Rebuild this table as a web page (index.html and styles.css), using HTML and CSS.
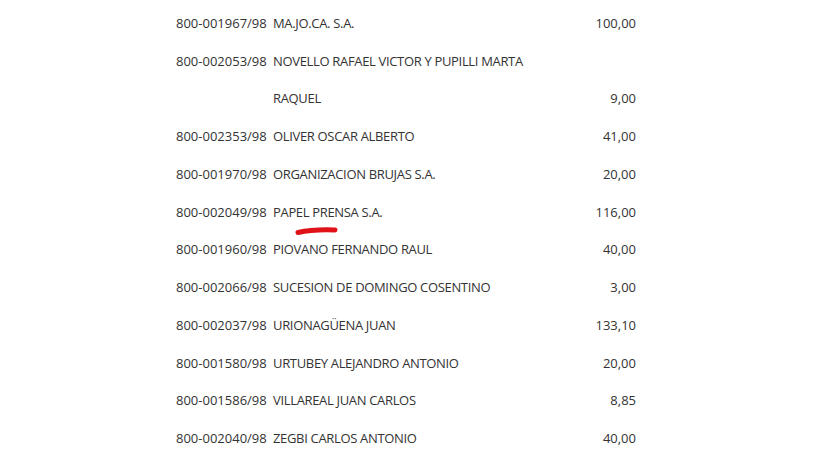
FILE: index.html
```html
<!DOCTYPE html>
<html lang="es">
<head>
<meta charset="utf-8">
<link rel="stylesheet" href="styles.css">
</head>
<body>
<div class="list">
  <div class="row"><span class="code">800-001967/98</span><span class="name">MA.JO.CA. S.A.</span><span class="amt">100,00</span></div>
  <div class="row"><span class="code">800-002053/98</span><span class="name">NOVELLO RAFAEL VICTOR Y PUPILLI MARTA RAQUEL</span><span class="amt amt-bottom">9,00</span></div>
  <div class="row"><span class="code">800-002353/98</span><span class="name">OLIVER OSCAR ALBERTO</span><span class="amt">41,00</span></div>
  <div class="row"><span class="code">800-001970/98</span><span class="name">ORGANIZACION BRUJAS S.A.</span><span class="amt">20,00</span></div>
  <div class="row"><span class="code">800-002049/98</span><span class="name"><span class="marked">PAPEL PRENSA S.A.<svg class="stroke" width="44" height="10" viewBox="0 0 44 10"><path d="M3 6.5 C 12 4.5, 26 3.5, 40 4" stroke="#e01218" stroke-width="5" stroke-linecap="round" fill="none"/></svg></span></span><span class="amt">116,00</span></div>
  <div class="row"><span class="code">800-001960/98</span><span class="name">PIOVANO FERNANDO RAUL</span><span class="amt">40,00</span></div>
  <div class="row"><span class="code">800-002066/98</span><span class="name">SUCESION DE DOMINGO COSENTINO</span><span class="amt">3,00</span></div>
  <div class="row"><span class="code">800-002037/98</span><span class="name">URIONAGÜENA JUAN</span><span class="amt">133,10</span></div>
  <div class="row"><span class="code">800-001580/98</span><span class="name">URTUBEY ALEJANDRO ANTONIO</span><span class="amt">20,00</span></div>
  <div class="row"><span class="code">800-001586/98</span><span class="name">VILLAREAL JUAN CARLOS</span><span class="amt">8,85</span></div>
  <div class="row"><span class="code">800-002040/98</span><span class="name">ZEGBI CARLOS ANTONIO</span><span class="amt">40,00</span></div>
</div>
</body>
</html>
```

FILE: styles.css
```css
html, body {
  margin: 0;
  padding: 0;
  background: #ffffff;
}
body {
  font-family: "Open Sans", "Noto Sans", sans-serif;
  font-size: 13px;
  color: #333333;
}
.list {
  margin-left: 176px;
  padding-top: 5px;
  width: 460px;
}
.row {
  display: grid;
  grid-template-columns: 97px 270px 93px;
  line-height: 37.73px;
}
.code {
  white-space: nowrap;
}
.name {
  letter-spacing: -0.33px;
}
.amt {
  text-align: right;
}
.amt-bottom {
  align-self: end;
}
.marked {
  position: relative;
}
.stroke {
  position: absolute;
  left: 22px;
  top: 23px;
}
```
